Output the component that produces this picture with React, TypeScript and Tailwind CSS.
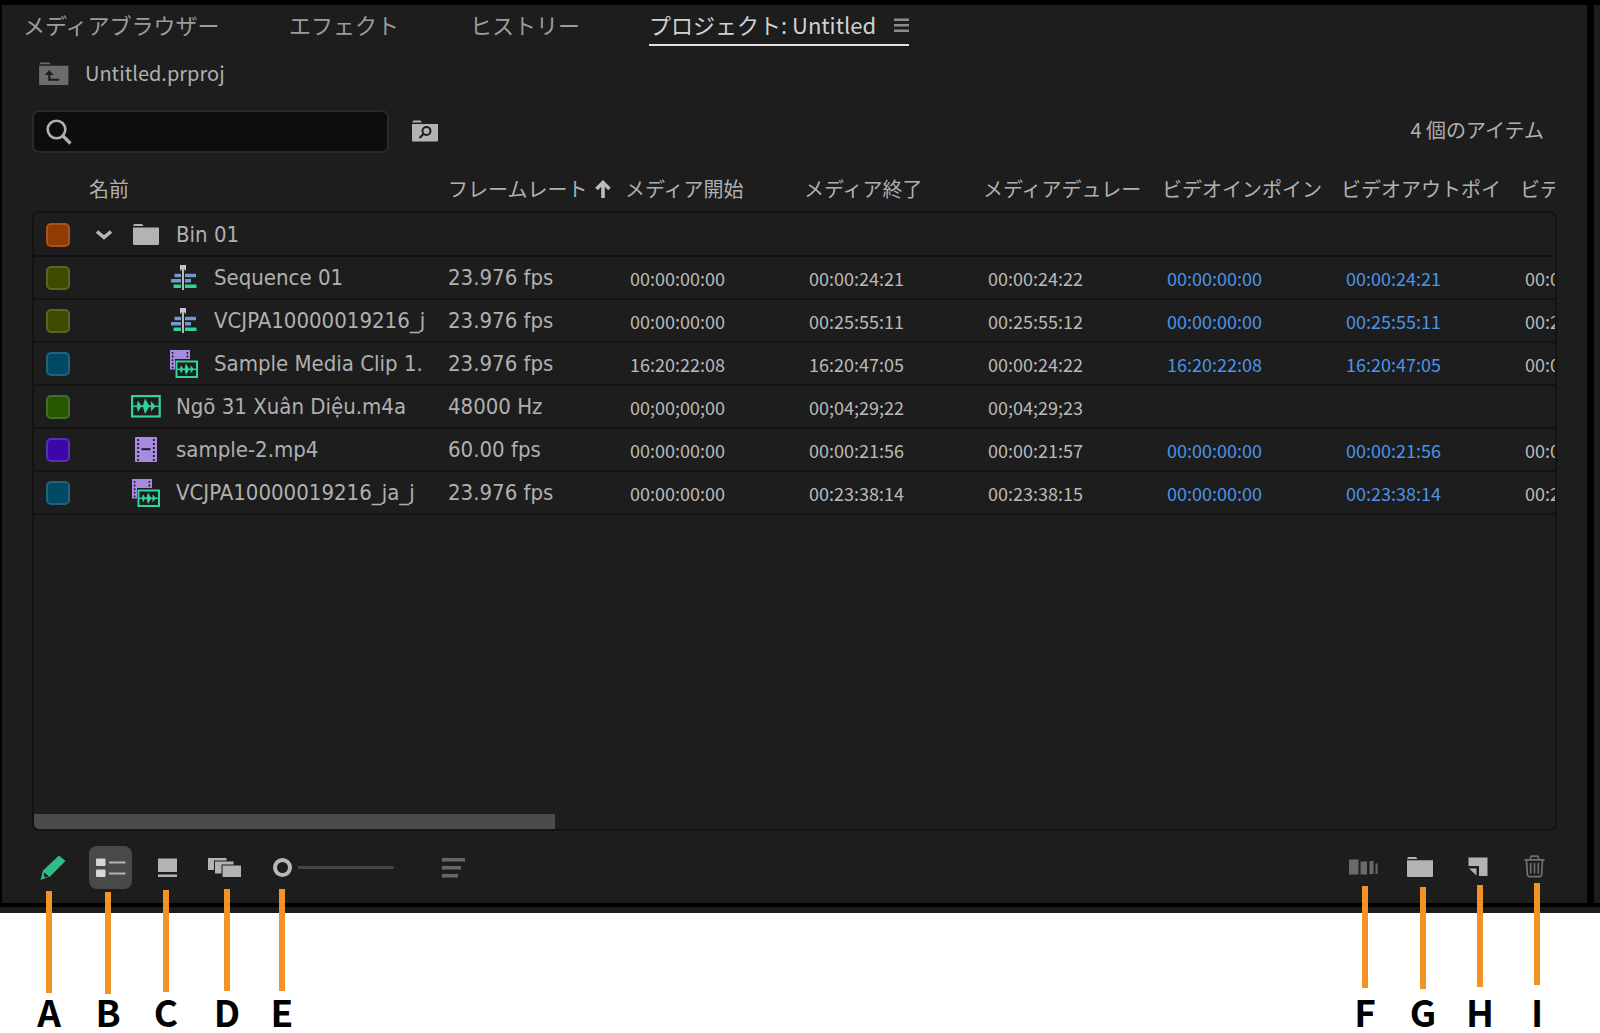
import React, { useState } from 'react';
import clsx from 'clsx';

type IconType = 'bin' | 'sequence' | 'av' | 'audio' | 'video';

interface ProjectItem {
  id: string;
  name: string;
  icon: IconType;
  swatch: string;
  nested?: boolean;
  rate?: string;
  start?: string;
  end?: string;
  duration?: string;
  inPoint?: string;
  outPoint?: string;
  last?: string;
}

const items: ProjectItem[] = [
  { id: 'bin-1', name: 'Bin 01', icon: 'bin', swatch: 'bg-[#903b04] border-[#a5531f]' },
  {
    id: 'seq-1',
    name: 'Sequence 01',
    icon: 'sequence',
    swatch: 'bg-[#3f4a00] border-[#5b6522]',
    nested: true,
    rate: '23.976 fps',
    start: '00:00:00:00',
    end: '00:00:24:21',
    duration: '00:00:24:22',
    inPoint: '00:00:00:00',
    outPoint: '00:00:24:21',
    last: '00:00:24:22',
  },
  {
    id: 'seq-2',
    name: 'VCJPA10000019216_j',
    icon: 'sequence',
    swatch: 'bg-[#3f4a00] border-[#5b6522]',
    nested: true,
    rate: '23.976 fps',
    start: '00:00:00:00',
    end: '00:25:55:11',
    duration: '00:25:55:12',
    inPoint: '00:00:00:00',
    outPoint: '00:25:55:11',
    last: '00:25:55:12',
  },
  {
    id: 'clip-1',
    name: 'Sample Media Clip 1.',
    icon: 'av',
    swatch: 'bg-[#004a66] border-[#22627c]',
    nested: true,
    rate: '23.976 fps',
    start: '16:20:22:08',
    end: '16:20:47:05',
    duration: '00:00:24:22',
    inPoint: '16:20:22:08',
    outPoint: '16:20:47:05',
    last: '00:00:24:22',
  },
  {
    id: 'audio-1',
    name: 'Ngõ 31 Xuân Diệu.m4a',
    icon: 'audio',
    swatch: 'bg-[#285600] border-[#446e24]',
    rate: '48000 Hz',
    start: '00;00;00;00',
    end: '00;04;29;22',
    duration: '00;04;29;23',
  },
  {
    id: 'video-1',
    name: 'sample-2.mp4',
    icon: 'video',
    swatch: 'bg-[#3d06a8] border-[#572fb2]',
    rate: '60.00 fps',
    start: '00:00:00:00',
    end: '00:00:21:56',
    duration: '00:00:21:57',
    inPoint: '00:00:00:00',
    outPoint: '00:00:21:56',
    last: '00:00:21:57',
  },
  {
    id: 'clip-2',
    name: 'VCJPA10000019216_ja_j',
    icon: 'av',
    swatch: 'bg-[#004a66] border-[#22627c]',
    rate: '23.976 fps',
    start: '00:00:00:00',
    end: '00:23:38:14',
    duration: '00:23:38:15',
    inPoint: '00:00:00:00',
    outPoint: '00:23:38:14',
    last: '00:23:38:15',
  },
];

const columns = ['メディア開始', 'メディア終了', 'メディアデュレー', 'ビデオインポイン', 'ビデオアウトポイ'];

const tabs = [
  { name: 'メディアブラウザー', className: 'w-[266px]' },
  { name: 'エフェクト', className: 'w-[181px]' },
  { name: 'ヒストリー', className: 'w-[179px]' },
];

const callouts = [
  { label: 'A', className: 'left-[29px] h-[142px]' },
  { label: 'B', className: 'left-[88px] h-[141px]' },
  { label: 'C', className: 'left-[146px] h-[143px]' },
  { label: 'D', className: 'left-[207px] h-[144px]' },
  { label: 'E', className: 'left-[262px] h-[144px]' },
  { label: 'F', className: 'right-[215px] h-[147px]' },
  { label: 'G', className: 'right-[157px] h-[146px]' },
  { label: 'H', className: 'right-[100px] h-[148px]' },
  { label: 'I', className: 'right-[43px] h-[150px]' },
];

const rowGrid = 'grid grid-cols-[55px_359px_177px_repeat(5,179px)_minmax(0,1fr)] items-center';

const AudioIcon: React.FC = () => (
  <svg width="30" height="23" viewBox="0 0 30 23" fill="none">
    <rect x="1.1" y="1.1" width="27.6" height="20.4" stroke="#2fd597" strokeWidth="2.2" />
    <path d="M2 11.3h26" stroke="#2fd597" strokeWidth="1.6" />
    <path
      d="M7 5.5 10 10.5h2L14 3.5l4 7h2V6l4.5 5.3L20 16.6v-4.5h-2l-4 7-2-7h-2l-3 5-1.5-5.8z"
      fill="#2fd597"
    />
  </svg>
);

const VideoIcon: React.FC = () => (
  <svg width="22" height="25" viewBox="0 0 22 25" fill="none">
    <rect width="22" height="25" rx="1" fill="#a78be0" />
    <path d="M3.2 2v22M18.8 2v22" stroke="#1d1d1d" strokeWidth="1.8" strokeDasharray="2 2" />
    <path d="M6.5 12.2h9" stroke="#1d1d1d" strokeWidth="2" />
  </svg>
);

const AvIcon: React.FC = () => (
  <svg width="28" height="28" viewBox="0 0 28 28" fill="none">
    <path d="M0 0h20v9H5v10.5H0z" fill="#a78be0" />
    <path d="M2.6 2v17M17.4 2v8" stroke="#1d1d1d" strokeWidth="1.6" strokeDasharray="1.8 1.8" />
    <rect x="6.5" y="11.5" width="20.5" height="15.5" fill="#1d1d1d" stroke="#2fd597" strokeWidth="2" />
    <path d="M7 19.3h20" stroke="#2fd597" strokeWidth="1.4" />
    <path
      d="M11 15l2 3.7h1.5L16 13.5l3 5.2h1.5v-3.5l3.5 4.1-3.5 4.1v-3.5H19l-3 5.2-1.5-5.2H13l-2 3.7-1.2-4.3z"
      fill="#2fd597"
    />
  </svg>
);

const SequenceIcon: React.FC = () => (
  <svg width="26" height="26" viewBox="0 0 26 26" fill="none">
    <path d="M3.5 10.5h6.5M14 10.5h11M0 15.8h10M14 15.8h6" stroke="#7299cc" strokeWidth="3.6" />
    <path d="M2.5 21.3H10M14 21.3h11.5" stroke="#2fd597" strokeWidth="3.6" />
    <path d="M12 3v22" stroke="#b8b8b8" strokeWidth="2" />
    <path d="M9 0h6v5.5h-1.5V4h-3v1.5H9z" fill="#c4c4c4" />
  </svg>
);

const FolderIcon: React.FC<{ height: number }> = ({ height }) => (
  <svg width="26" height={height} viewBox="0 0 26 21" preserveAspectRatio="none" fill="#b3b3b3">
    <path d="M1 0h8l1.5 2H0zM0 3.5h26V20a1 1 0 0 1-1 1H1a1 1 0 0 1-1-1z" />
  </svg>
);

const ItemIcon: React.FC<{ type: IconType }> = ({ type }) => {
  switch (type) {
    case 'bin':
      return <FolderIcon height={21} />;
    case 'sequence':
      return <SequenceIcon />;
    case 'av':
      return <AvIcon />;
    case 'audio':
      return <AudioIcon />;
    case 'video':
      return <VideoIcon />;
  }
};

interface ItemRowProps {
  item: ProjectItem;
  expanded: boolean;
  onToggle: () => void;
}

const ItemRow: React.FC<ItemRowProps> = ({ item, expanded, onToggle }) => {
  const timeCell = 'pl-[5px] text-[18px] leading-[28px] text-[#bababa]';
  const pointCell = 'pl-[5px] text-[18px] leading-[28px] text-[#4a94ea]';
  const textCell = "font-['DejaVu_Sans_Condensed','Noto_Sans',sans-serif] text-[22px] leading-[30px]";

  return (
    <tr className={clsx(rowGrid, 'h-[43px] shrink-0 border-b-2 border-[#131313] whitespace-nowrap')}>
      <td className="pl-[12px]">
        <span className={clsx('block size-[24px] rounded-[5px] border-2', item.swatch)} />
      </td>
      <td className="flex items-center">
        <span className={clsx('flex shrink-0 pl-[6px]', item.nested ? 'w-[80px]' : 'w-[42px]')}>
          {item.icon === 'bin' && (
            <button type="button" aria-label={item.name} aria-expanded={expanded} onClick={onToggle}>
              <svg width="18" height="12" viewBox="0 0 18 12" fill="none">
                <path d="m2 2.5 7 6 7-6" stroke="#b8b8b8" strokeWidth="3.6" />
              </svg>
            </button>
          )}
        </span>
        <span className="flex w-[30px] shrink-0 justify-center">
          <ItemIcon type={item.icon} />
        </span>
        <span className={clsx(textCell, 'pl-[15px]')}>{item.name}</span>
      </td>
      <td className={textCell}>{item.rate}</td>
      <td className={timeCell}>{item.start}</td>
      <td className={timeCell}>{item.end}</td>
      <td className={timeCell}>{item.duration}</td>
      <td className={pointCell}>{item.inPoint}</td>
      <td className={pointCell}>{item.outPoint}</td>
      <td className={clsx(timeCell, 'overflow-hidden')}>{item.last}</td>
    </tr>
  );
};

const Toolbar: React.FC = () => {
  const [zoom, setZoom] = useState(0);

  return (
    <div className="mt-[15px] flex h-[43px] items-center justify-between">
      <div className="flex items-center">
        <button type="button" aria-label="書き込み可能" className="w-[57px] pl-[8px]">
          <svg width="27" height="26" viewBox="0 0 27 26" fill="none">
            <path d="M19 0.5 25.5 6 10 21.5 0.5 25 3 15.5z" fill="#2ebd85" />
            <path d="m4.2 17.5 4.6 3.7-3 1.3-2-1.6z" fill="#1d1d1d" />
          </svg>
        </button>
        <button
          type="button"
          aria-label="リスト表示"
          aria-pressed="true"
          className="flex size-[43px] items-center justify-center rounded-[8px] bg-[#494949]"
        >
          <svg width="30" height="20" viewBox="0 0 30 20" fill="#d6d6d6">
            <rect y="0.5" width="9.5" height="7.5" rx="1" />
            <rect y="11.5" width="9.5" height="7.5" rx="1" />
            <path d="M13 3.5h16.5v2H13zM13 14.5h16.5v2H13z" fill="#b4b4b4" />
          </svg>
        </button>
        <button type="button" aria-label="アイコン表示" className="pl-[26px]">
          <svg width="19" height="20" viewBox="0 0 19 20" fill="#b3b3b3">
            <path d="M0 0.5h19V14H0zM0 16.5h19v2.5H0z" />
          </svg>
        </button>
        <button type="button" aria-label="フリーフォーム表示" className="pl-[31px]">
          <svg width="34" height="20" viewBox="0 0 34 20" fill="#b3b3b3">
            <path d="M0 0h18.5v2.5H6V12H0z" />
            <path d="M7 3.5h18.5V6.5H13.5v9H7z" />
            <path d="M14.5 7.5H33V19H14.5z" />
          </svg>
        </button>
        <input
          type="range"
          min={0}
          max={100}
          value={zoom}
          onChange={(e) => setZoom(Number(e.target.value))}
          aria-label="アイコンサイズ"
          className="ml-[31px] h-[20px] w-[121px] appearance-none bg-transparent [&::-webkit-slider-runnable-track]:h-[3px] [&::-webkit-slider-runnable-track]:rounded-full [&::-webkit-slider-runnable-track]:bg-[#454545] [&::-webkit-slider-thumb]:-mt-[8px] [&::-webkit-slider-thumb]:size-[19px] [&::-webkit-slider-thumb]:appearance-none [&::-webkit-slider-thumb]:rounded-full [&::-webkit-slider-thumb]:border-4 [&::-webkit-slider-thumb]:border-solid [&::-webkit-slider-thumb]:border-[#b8b8b8] [&::-webkit-slider-thumb]:bg-[#1d1d1d] [&::-webkit-slider-thumb]:shadow-[0_0_0_6px_#1d1d1d]"
        />
        <button type="button" aria-label="並べ替え" className="pl-[48px]">
          <svg width="23" height="20" viewBox="0 0 23 20" fill="#686868">
            <path d="M0 0h23v3.5H0zM0 8h19v3.5H0zM0 16h16v3.5H0z" />
          </svg>
        </button>
      </div>

      <div className="flex items-center pr-[12px] pb-[2px]">
        <button type="button" aria-label="シーケンスへオート編集" className="mr-[29px]">
          <svg width="29" height="18" viewBox="0 0 29 18" fill="#6a6a6a">
            <path d="M0 1.5h9.5v15H0zM11.5 3.5h6.5v13h-6.5zM20.5 3h4v13h-4zM26.5 5.5h2V16h-2z" />
          </svg>
        </button>
        <button type="button" aria-label="新規ビン" className="mr-[35px]">
          <FolderIcon height={20} />
        </button>
        <button type="button" aria-label="新規項目" className="mr-[36px]">
          <svg width="20" height="20" viewBox="0 0 20 20" fill="#b3b3b3">
            <path d="M0.5 0.5H19.5V19H11V9H0.5z" />
            <path d="M1 11.5h7.5V18.5z" />
          </svg>
        </button>
        <button type="button" aria-label="消去">
          <svg width="21" height="23" viewBox="0 0 21 23" fill="none" stroke="#707070" strokeWidth="1.7">
            <path d="M0.5 4.8h20M6.5 4.5V2.3l1-1.2h6l1 1.2v2.2M2.5 5l1 15.5 1.2 1.2h11.6l1.2-1.2L18.5 5" />
            <path d="M6.7 8v10.5M10.5 8v10.5M14.3 8v10.5" />
          </svg>
        </button>
      </div>
    </div>
  );
};

const ProjectPanel: React.FC = () => {
  const [query, setQuery] = useState('');
  const [expanded, setExpanded] = useState(true);

  const visibleItems = items.filter((item) => expanded || !item.nested);

  return (
    <section className="min-w-0 flex-1 bg-[#1d1d1d] pb-[14px] text-[#b0b0b0]">
      {/* Tabs */}
      <div role="tablist" className="flex h-[41px] pl-[21px] text-[22px]">
        {tabs.map((tab) => (
          <button
            key={tab.name}
            type="button"
            role="tab"
            aria-selected="false"
            className={clsx('border-b-2 border-transparent pb-px text-left text-[#9c9c9c]', tab.className)}
          >
            {tab.name}
          </button>
        ))}
        <button
          type="button"
          role="tab"
          aria-selected="true"
          className="flex items-center gap-[18px] border-b-2 border-[#e0e0e0] pb-px text-[#d2d2d2]"
        >
          プロジェクト: Untitled
          <svg width="15" height="18" viewBox="0 0 15 18" fill="#8c8c8c">
            <path d="M0 3.5h15V6H0zM0 9h15v2.5H0zM0 14.5h15V17H0z" />
          </svg>
        </button>
      </div>

      <div className="flex flex-col px-[30px]">
        {/* Breadcrumb */}
        <div className="mt-[15px] flex h-[24px] items-center gap-[16px] pl-[7px] text-[20px]">
          <button type="button" aria-label="上の階層へ">
            <svg width="30" height="24" viewBox="0 0 31 25" fill="#6c6c6c">
              <path d="M1.5 1.5h9L12 3.5H0zM0 5h30.5v19a1 1 0 0 1-1 1h-28.5a1 1 0 0 1-1-1z" />
              <path d="M10.5 9.5 15 14.5h-3.2v4H21v2H9.5v-6H6z" fill="#1d1d1d" />
            </svg>
          </button>
          Untitled.prproj
        </div>

        {/* Search */}
        <div className="mt-[25px] flex h-[43px] items-center">
          <label className="flex h-[43px] w-[357px] items-center rounded-[7px] border-2 border-[#2a2a2a] bg-[#0d0d0d] pl-[12px]">
            <svg width="26" height="26" viewBox="0 0 26 26" fill="none" stroke="#b0b0b0">
              <circle cx="10.5" cy="10.5" r="8.8" strokeWidth="2.6" />
              <path d="m17 17 7.5 7.5" strokeWidth="3.2" />
            </svg>
            <input
              type="text"
              value={query}
              onChange={(e) => setQuery(e.target.value)}
              aria-label="検索"
              className="ml-2 min-w-0 flex-1 bg-transparent text-[20px] outline-none"
            />
          </label>
          <button type="button" aria-label="検索ビンを作成" className="ml-[23px] pb-px">
            <svg width="26" height="22" viewBox="0 0 26 22" fill="#b3b3b3">
              <path d="M1.5 0.5h7L10 2.5H0zM0 4h26v16.5a1 1 0 0 1-1 1H1a1 1 0 0 1-1-1z" />
              <circle cx="14.5" cy="11" r="4" fill="none" stroke="#1d1d1d" strokeWidth="2" />
              <path d="m11.5 14-4 4" stroke="#1d1d1d" strokeWidth="2.2" />
            </svg>
          </button>
          <span className="ml-auto pr-[13px] pb-[3px] text-[20px] leading-[30px]">4 個のアイテム</span>
        </div>

        {/* Items */}
        <table className="mt-[14px] flex flex-col">
          <thead className="block px-[2px]">
            <tr className={clsx(rowGrid, 'h-[44px] text-left text-[20px] leading-[32px] whitespace-nowrap')}>
              <td />
              <th className="font-normal">名前</th>
              <th className="font-normal" aria-sort="ascending">
                <button type="button" className="flex items-center gap-[8px]">
                  フレームレート
                  <svg width="16" height="18" viewBox="0 0 16 18" fill="none" stroke="#bcbcbc" strokeWidth="3.6">
                    <path d="M8 18V3M1.5 9 8 2.5 14.5 9" />
                  </svg>
                </button>
              </th>
              {columns.map((column) => (
                <th key={column} className="font-normal">
                  {column}
                </th>
              ))}
              <th className="overflow-hidden font-normal">ビデ</th>
            </tr>
          </thead>
          <tbody className="flex min-h-[620px] flex-col overflow-hidden rounded-[7px] border-2 border-[#131313] pt-px after:mt-auto after:h-[15px] after:w-[521px] after:shrink-0 after:bg-[#4b4b4b] after:content-['']">
            {visibleItems.map((item) => (
              <ItemRow key={item.id} item={item} expanded={expanded} onToggle={() => setExpanded(!expanded)} />
            ))}
          </tbody>
        </table>

        <Toolbar />
      </div>
    </section>
  );
};

const App: React.FC = () => {
  return (
    <main className="relative overflow-hidden bg-white pb-[120px] font-['Noto_Sans_CJK_JP',sans-serif]">
      <div className="border-b-[6px] border-[#1d1d1d]">
        <div className="flex bg-black pt-[5px] pb-[4px] pl-[2px]">
          <ProjectPanel />
          <div className="ml-[7px] w-[6px] bg-[#1d1d1d]" />
        </div>
      </div>

      {/* Callouts pinned to the toolbar icons */}
      {callouts.map((callout) => (
        <div
          key={callout.label}
          className={clsx(
            'pointer-events-none absolute bottom-0 flex w-[40px] flex-col items-center justify-between',
            callout.className
          )}
        >
          <span className="h-[102px] w-[6px] shrink-0 bg-[#f29423]" />
          <span className="pb-[5px] text-[37px] leading-[34px] font-bold text-black">{callout.label}</span>
        </div>
      ))}
    </main>
  );
};

export default App;
